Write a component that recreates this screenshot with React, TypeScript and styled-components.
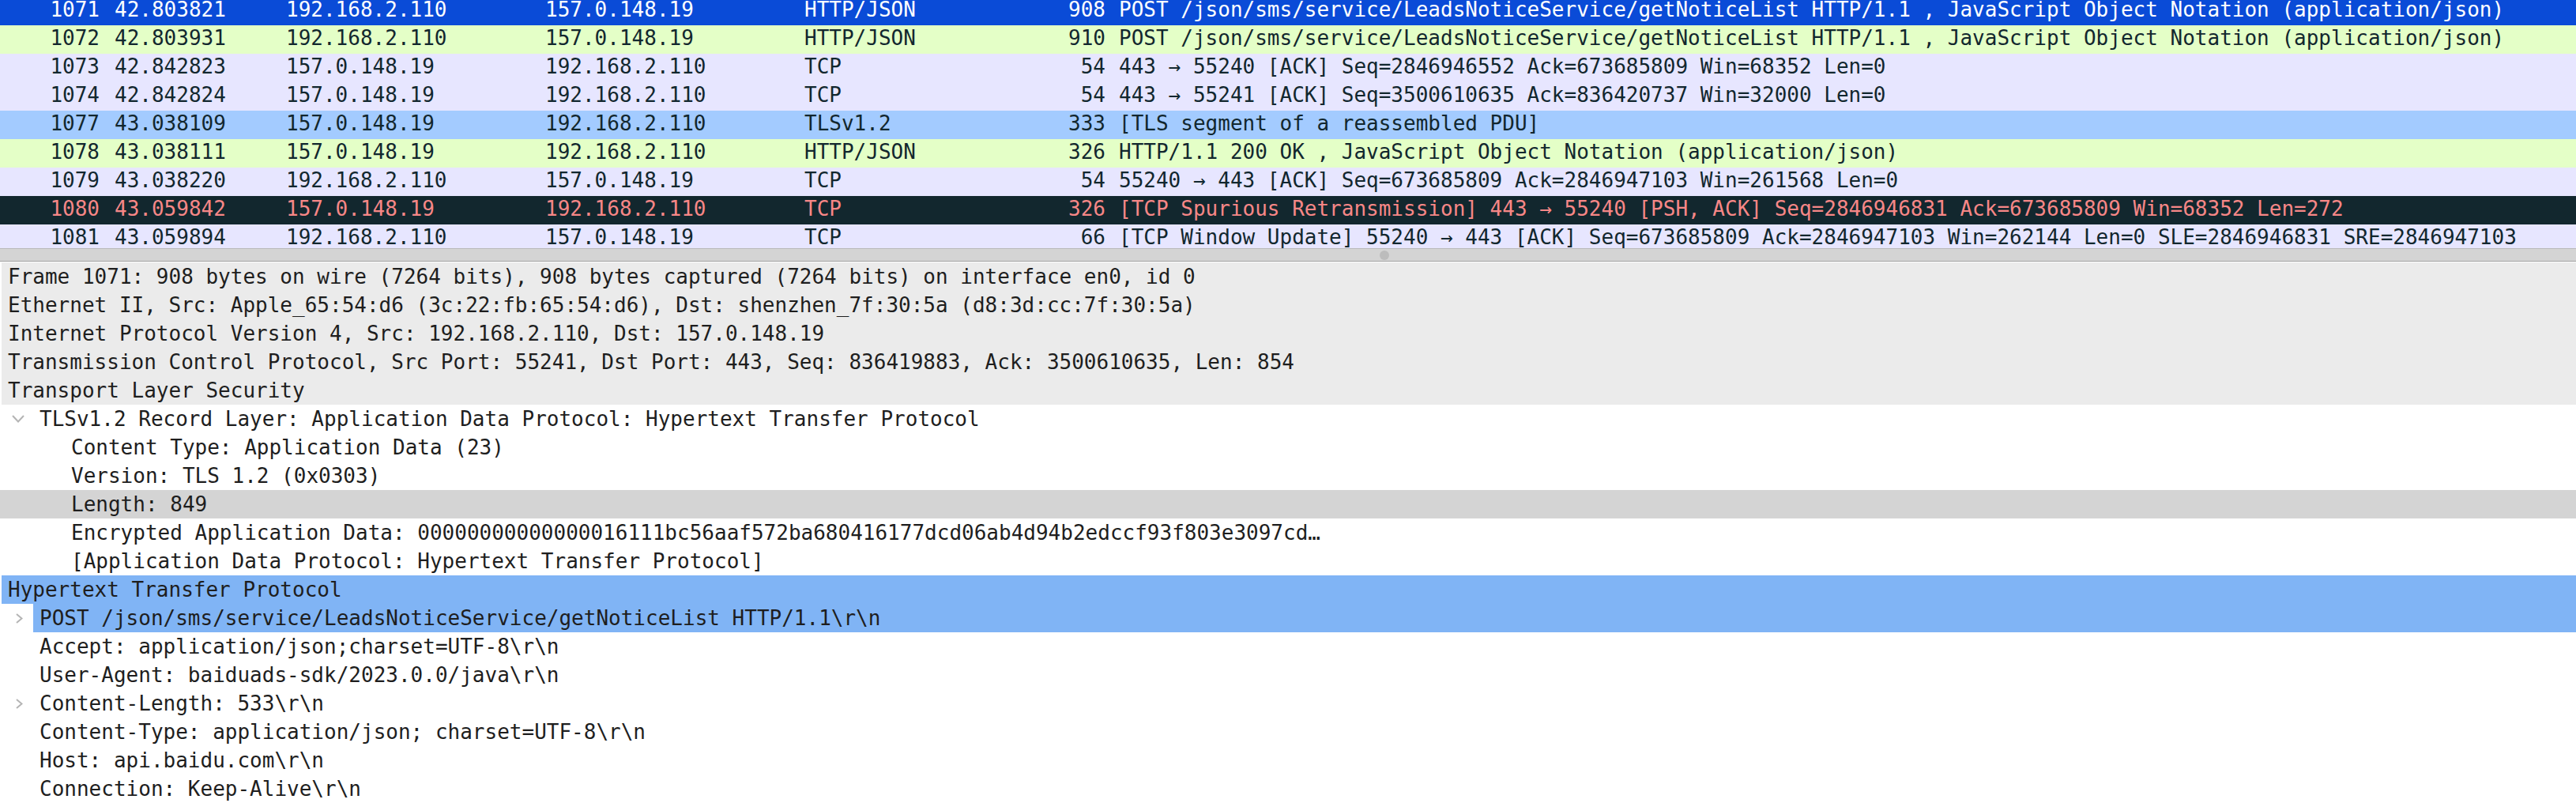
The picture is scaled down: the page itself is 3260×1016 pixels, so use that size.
import React from "react";
import styled, { createGlobalStyle } from "styled-components";

const MONO = `"DejaVu Sans Mono", "Liberation Mono", monospace`;

const GlobalStyle = createGlobalStyle`
  html, body {
    margin: 0;
    padding: 0;
    background: #ffffff;
    overflow: hidden;
  }
  #root {
    width: 3260px;
    height: 1016px;
  }
`;

type RowKind = "selected" | "http" | "tcp" | "tls" | "bad";

const rowColors: Record<RowKind, { bg: string; fg: string }> = {
  selected: { bg: "#0a4bd7", fg: "#ffffff" },
  http: { bg: "#e4ffc7", fg: "#12272e" },
  tcp: { bg: "#e7e6ff", fg: "#12272e" },
  tls: { bg: "#a3cbff", fg: "#12272e" },
  bad: { bg: "#12272e", fg: "#f78787" },
};

const Window = styled.div`
  display: flex;
  flex-direction: column;
  width: 3260px;
  height: 1016px;
  overflow: hidden;
  font-family: ${MONO};
  font-size: 26px;
`;

const ListViewport = styled.div`
  height: 314px;
  overflow: hidden;
  flex: none;
`;

const ListBody = styled.div`
  margin-top: -4px;
  display: flex;
  flex-direction: column;
`;

const PacketRow = styled.div<{ $kind: RowKind }>`
  display: grid;
  grid-template-columns: 145px 217px 328px 328px 300px 81px 1fr;
  height: 36px;
  box-sizing: border-box;
  padding-bottom: 4px;
  line-height: 32px;
  white-space: pre;
  background: ${(p) => rowColors[p.$kind].bg};
  color: ${(p) => rowColors[p.$kind].fg};
`;

const Cell = styled.span<{ $right?: boolean; $padL?: number; $padR?: number }>`
  overflow: hidden;
  text-align: ${(p) => (p.$right ? "right" : "left")};
  padding-left: ${(p) => p.$padL ?? 0}px;
  padding-right: ${(p) => p.$padR ?? 0}px;
`;

const Splitter = styled.div`
  flex: none;
  height: 15px;
  border-top: 1px solid #b9b9b9;
  border-bottom: 1px solid #a2a2a2;
  background: #d4d4d4;
  display: flex;
  align-items: center;
  padding-left: 1746px;
`;

const Handle = styled.div`
  width: 12px;
  height: 12px;
  border-radius: 50%;
  background: #bcbcbc;
`;

const DetailPane = styled.div`
  flex: 1;
  padding-top: 1px;
  display: flex;
  flex-direction: column;
  color: #1e1e1e;
`;

type Shade = "none" | "gray" | "blue";

const shadeColors: Record<Shade, string> = {
  none: "transparent",
  gray: "#ebebeb",
  blue: "#80b4f5",
};

const DetailRow = styled.div<{ $hover?: boolean }>`
  display: flex;
  height: 36px;
  flex: none;
  padding-left: 2px;
  line-height: 36px;
  white-space: pre;
  background: ${(p) => (p.$hover ? "#d4d4d4" : "transparent")};
`;

const Indent = styled.div<{ $level: number }>`
  width: ${(p) => p.$level * 40}px;
  flex: none;
  display: flex;
  align-items: center;
  justify-content: flex-end;
`;

const Label = styled.div<{ $shade: Shade }>`
  flex: 1;
  padding-left: 8px;
  background: ${(p) => shadeColors[p.$shade]};
  overflow: hidden;
`;

const ChevronDown = () => (
  <svg width="16" height="10" viewBox="0 0 16 10" style={{ marginRight: 11 }}>
    <polyline points="1,1 8,8.5 15,1" fill="none" stroke="#b4b4b4" strokeWidth="2" />
  </svg>
);

const ChevronRight = () => (
  <svg width="9" height="13" viewBox="0 0 9 13" style={{ marginRight: 13 }}>
    <polyline points="1,1 7.5,6.5 1,12" fill="none" stroke="#b4b4b4" strokeWidth="2" />
  </svg>
);

interface Packet {
  no: string;
  time: string;
  src: string;
  dst: string;
  proto: string;
  len: string;
  info: string;
  kind: RowKind;
}

const POST_INFO =
  "POST /json/sms/service/LeadsNoticeService/getNoticeList HTTP/1.1 , JavaScript Object Notation (application/json)";

const packets: Packet[] = [
  { no: "1071", time: "42.803821", src: "192.168.2.110", dst: "157.0.148.19", proto: "HTTP/JSON", len: "908", info: POST_INFO, kind: "selected" },
  { no: "1072", time: "42.803931", src: "192.168.2.110", dst: "157.0.148.19", proto: "HTTP/JSON", len: "910", info: POST_INFO, kind: "http" },
  { no: "1073", time: "42.842823", src: "157.0.148.19", dst: "192.168.2.110", proto: "TCP", len: "54", info: "443 → 55240 [ACK] Seq=2846946552 Ack=673685809 Win=68352 Len=0", kind: "tcp" },
  { no: "1074", time: "42.842824", src: "157.0.148.19", dst: "192.168.2.110", proto: "TCP", len: "54", info: "443 → 55241 [ACK] Seq=3500610635 Ack=836420737 Win=32000 Len=0", kind: "tcp" },
  { no: "1077", time: "43.038109", src: "157.0.148.19", dst: "192.168.2.110", proto: "TLSv1.2", len: "333", info: "[TLS segment of a reassembled PDU]", kind: "tls" },
  { no: "1078", time: "43.038111", src: "157.0.148.19", dst: "192.168.2.110", proto: "HTTP/JSON", len: "326", info: "HTTP/1.1 200 OK , JavaScript Object Notation (application/json)", kind: "http" },
  { no: "1079", time: "43.038220", src: "192.168.2.110", dst: "157.0.148.19", proto: "TCP", len: "54", info: "55240 → 443 [ACK] Seq=673685809 Ack=2846947103 Win=261568 Len=0", kind: "tcp" },
  { no: "1080", time: "43.059842", src: "157.0.148.19", dst: "192.168.2.110", proto: "TCP", len: "326", info: "[TCP Spurious Retransmission] 443 → 55240 [PSH, ACK] Seq=2846946831 Ack=673685809 Win=68352 Len=272", kind: "bad" },
  { no: "1081", time: "43.059894", src: "192.168.2.110", dst: "157.0.148.19", proto: "TCP", len: "66", info: "[TCP Window Update] 55240 → 443 [ACK] Seq=673685809 Ack=2846947103 Win=262144 Len=0 SLE=2846946831 SRE=2846947103", kind: "tcp" },
];

interface Detail {
  text: string;
  level: number;
  shade?: Shade;
  hover?: boolean;
  chevron?: "down" | "right";
}

const details: Detail[] = [
  { text: "Frame 1071: 908 bytes on wire (7264 bits), 908 bytes captured (7264 bits) on interface en0, id 0", level: 0, shade: "gray" },
  { text: "Ethernet II, Src: Apple_65:54:d6 (3c:22:fb:65:54:d6), Dst: shenzhen_7f:30:5a (d8:3d:cc:7f:30:5a)", level: 0, shade: "gray" },
  { text: "Internet Protocol Version 4, Src: 192.168.2.110, Dst: 157.0.148.19", level: 0, shade: "gray" },
  { text: "Transmission Control Protocol, Src Port: 55241, Dst Port: 443, Seq: 836419883, Ack: 3500610635, Len: 854", level: 0, shade: "gray" },
  { text: "Transport Layer Security", level: 0, shade: "gray" },
  { text: "TLSv1.2 Record Layer: Application Data Protocol: Hypertext Transfer Protocol", level: 1, chevron: "down" },
  { text: "Content Type: Application Data (23)", level: 2 },
  { text: "Version: TLS 1.2 (0x0303)", level: 2 },
  { text: "Length: 849", level: 2, hover: true },
  { text: "Encrypted Application Data: 00000000000000016111bc56aaf572ba680416177dcd06ab4d94b2edccf93f803e3097cd…", level: 2 },
  { text: "[Application Data Protocol: Hypertext Transfer Protocol]", level: 2 },
  { text: "Hypertext Transfer Protocol", level: 0, shade: "blue" },
  { text: "POST /json/sms/service/LeadsNoticeService/getNoticeList HTTP/1.1\\r\\n", level: 1, shade: "blue", chevron: "right" },
  { text: "Accept: application/json;charset=UTF-8\\r\\n", level: 1 },
  { text: "User-Agent: baiduads-sdk/2023.0.0/java\\r\\n", level: 1 },
  { text: "Content-Length: 533\\r\\n", level: 1, chevron: "right" },
  { text: "Content-Type: application/json; charset=UTF-8\\r\\n", level: 1 },
  { text: "Host: api.baidu.com\\r\\n", level: 1 },
  { text: "Connection: Keep-Alive\\r\\n", level: 1 },
];

export default function App() {
  return (
    <>
      <GlobalStyle />
      <Window>
        <ListViewport>
          <ListBody>
            {packets.map((p) => (
              <PacketRow key={p.no} $kind={p.kind}>
                <Cell $right $padR={19}>{p.no}</Cell>
                <Cell>{p.time}</Cell>
                <Cell>{p.src}</Cell>
                <Cell>{p.dst}</Cell>
                <Cell>{p.proto}</Cell>
                <Cell $right>{p.len}</Cell>
                <Cell $padL={17}>{p.info}</Cell>
              </PacketRow>
            ))}
          </ListBody>
        </ListViewport>
        <Splitter>
          <Handle />
        </Splitter>
        <DetailPane>
          {details.map((d, i) => (
            <DetailRow key={i} $hover={d.hover}>
              <Indent $level={d.level}>
                {d.chevron === "down" && <ChevronDown />}
                {d.chevron === "right" && <ChevronRight />}
              </Indent>
              <Label $shade={d.shade ?? "none"}>{d.text}</Label>
            </DetailRow>
          ))}
        </DetailPane>
      </Window>
    </>
  );
}
